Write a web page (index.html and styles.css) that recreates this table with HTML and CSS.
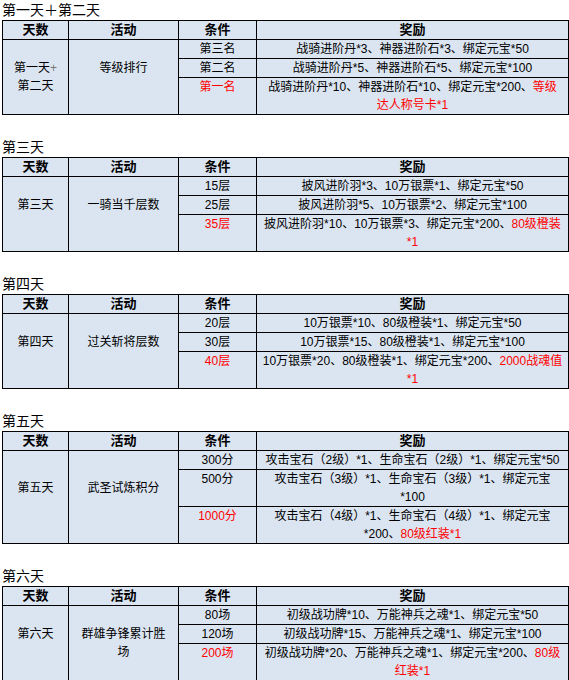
FILE: index.html
```html
<!DOCTYPE html>
<html lang="zh-CN">
<head>
<meta charset="utf-8">
<title>活动奖励</title>
<link rel="stylesheet" href="styles.css">
</head>
<body>
<section class="section">
  <h2 class="title">第一天＋第二天</h2>
  <table class="grid">
    <colgroup><col class="c1"><col class="c2"><col class="c3"><col></colgroup>
    <tr><th>天数</th><th>活动</th><th>条件</th><th>奖励</th></tr>
    <tr><td class="span" rowspan="3">第一天<span class="plus">+</span><br>第二天</td><td class="span" rowspan="3">等级排行<br>&nbsp;</td><td>第三名</td><td>战骑进阶丹*3、神器进阶石*3、绑定元宝*50</td></tr>
    <tr><td>第二名</td><td>战骑进阶丹*5、神器进阶石*5、绑定元宝*100</td></tr>
    <tr><td class="red">第一名</td><td>战骑进阶丹*10、神器进阶石*10、绑定元宝*200、<span class="red">等级<br>达人称号卡*1</span></td></tr>
  </table>
</section>
<section class="section">
  <h2 class="title">第三天</h2>
  <table class="grid">
    <colgroup><col class="c1"><col class="c2"><col class="c3"><col></colgroup>
    <tr><th>天数</th><th>活动</th><th>条件</th><th>奖励</th></tr>
    <tr><td class="span" rowspan="3">第三天<br>&nbsp;</td><td class="span" rowspan="3">一骑当千层数<br>&nbsp;</td><td>15层</td><td>披风进阶羽*3、10万银票*1、绑定元宝*50</td></tr>
    <tr><td>25层</td><td>披风进阶羽*5、10万银票*2、绑定元宝*100</td></tr>
    <tr><td class="red">35层</td><td>披风进阶羽*10、10万银票*3、绑定元宝*200、<span class="red">80级橙装<br>*1</span></td></tr>
  </table>
</section>
<section class="section">
  <h2 class="title">第四天</h2>
  <table class="grid">
    <colgroup><col class="c1"><col class="c2"><col class="c3"><col></colgroup>
    <tr><th>天数</th><th>活动</th><th>条件</th><th>奖励</th></tr>
    <tr><td class="span" rowspan="3">第四天<br>&nbsp;</td><td class="span" rowspan="3">过关斩将层数<br>&nbsp;</td><td>20层</td><td>10万银票*10、80级橙装*1、绑定元宝*50</td></tr>
    <tr><td>30层</td><td>10万银票*15、80级橙装*1、绑定元宝*100</td></tr>
    <tr><td class="red">40层</td><td>10万银票*20、80级橙装*1、绑定元宝*200、<span class="red">2000战魂值<br>*1</span></td></tr>
  </table>
</section>
<section class="section">
  <h2 class="title">第五天</h2>
  <table class="grid">
    <colgroup><col class="c1"><col class="c2"><col class="c3"><col></colgroup>
    <tr><th>天数</th><th>活动</th><th>条件</th><th>奖励</th></tr>
    <tr><td class="span" rowspan="3">第五天<br>&nbsp;</td><td class="span" rowspan="3">武圣试炼积分<br>&nbsp;</td><td>300分</td><td>攻击宝石（2级）*1、生命宝石（2级）*1、绑定元宝*50</td></tr>
    <tr><td>500分</td><td>攻击宝石（3级）*1、生命宝石（3级）*1、绑定元宝<br>*100</td></tr>
    <tr><td class="red">1000分</td><td>攻击宝石（4级）*1、生命宝石（4级）*1、绑定元宝<br>*200、<span class="red">80级红装*1</span></td></tr>
  </table>
</section>
<section class="section">
  <h2 class="title">第六天</h2>
  <table class="grid">
    <colgroup><col class="c1"><col class="c2"><col class="c3"><col></colgroup>
    <tr><th>天数</th><th>活动</th><th>条件</th><th>奖励</th></tr>
    <tr><td class="span" rowspan="3">第六天<br>&nbsp;</td><td class="span" rowspan="3">群雄争锋累计胜<br>场</td><td>80场</td><td>初级战功牌*10、万能神兵之魂*1、绑定元宝*50</td></tr>
    <tr><td>120场</td><td>初级战功牌*15、万能神兵之魂*1、绑定元宝*100</td></tr>
    <tr><td class="red">200场</td><td>初级战功牌*20、万能神兵之魂*1、绑定元宝*200、<span class="red">80级<br>红装*1</span></td></tr>
  </table>
</section>
</body>
</html>
```
FILE: styles.css
```css
html, body {
  margin: 0;
  padding: 0;
  background: #ffffff;
}
body {
  padding-left: 2px;
  font-family: "Liberation Sans", "Noto Sans CJK SC", sans-serif;
  color: #000000;
}
.section {
  margin-top: 22px;
}
.section:first-child {
  margin-top: 0;
}
.title {
  margin: 0;
  font-size: 14px;
  line-height: 20px;
  font-weight: normal;
}
.grid {
  border-collapse: collapse;
  table-layout: fixed;
  width: 567px;
  background: #dbe5f1;
}
.c1 { width: 66px; }
.c2 { width: 110px; }
.c3 { width: 78px; }
.grid th,
.grid td {
  border: 1px solid #000000;
  padding: 0;
  font-size: 12px;
  line-height: 18px;
  text-align: center;
  white-space: nowrap;
  vertical-align: top;
}
.grid th {
  font-size: 13px;
  font-weight: bold;
}
.grid td.span {
  vertical-align: middle;
}
.red {
  color: #ff0000;
}
.plus {
  color: #777777;
}
```
